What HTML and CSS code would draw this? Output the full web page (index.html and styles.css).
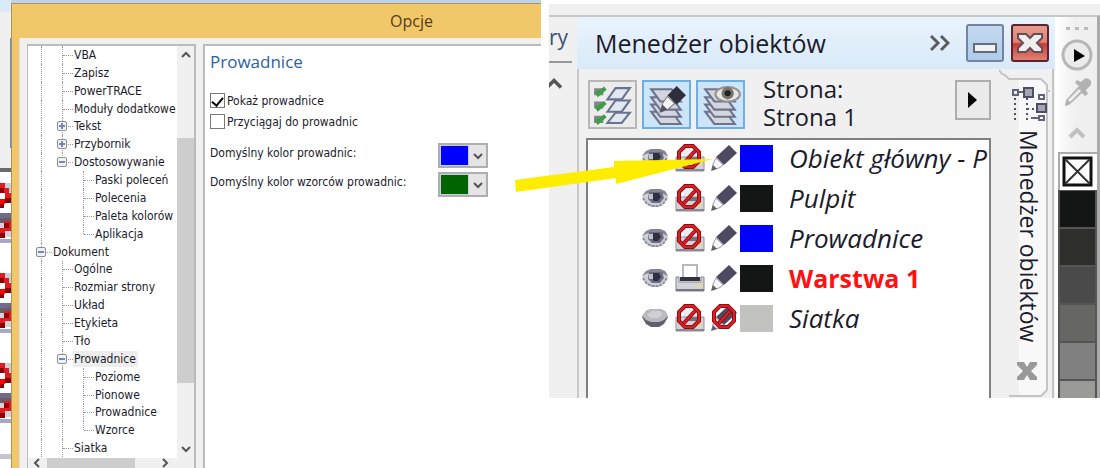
FILE: index.html
```html
<!DOCTYPE html>
<html lang="pl">
<head>
    <meta charset="UTF-8">
    <meta name="viewport" content="width=device-width, initial-scale=1.0">
    <title>Opcje - Prowadnice</title>
    <link rel="stylesheet" href="styles.css">
</head>
<body>
    <!-- shared icons -->
    <svg class="defs" aria-hidden="true">
        <symbol id="eye" viewBox="0 0 28 20">
            <path d="M1 8L5 3L10 1H19L24 3L27 8L24 14L18 19H10L4 14Z" fill="#cfcfd8"/>
            <path d="M1 8L5 3L10 1H19L24 3L27 8L22 6L18 4H10L5 6Z" fill="#858594"/>
            <path d="M2 10L6 16L11 18H17L22 16L26 10" fill="none" stroke="#8e8e9c" stroke-width="2" stroke-dasharray="3 1"/>
            <path d="M8 4H21L23 10L19 15H11L7 11Z" fill="#6c6c80"/>
            <path d="M12 5H18L20 9L17 13H13L11 10Z" fill="#2f2f42"/>
            <path d="M8 6h4v5H8z" fill="#c2c2ce"/>
        </symbol>
        <symbol id="eye-closed" viewBox="0 0 28 20">
            <path d="M1 9L5 3L10 1H19L24 3L27 9L23 16L18 19H10L5 16Z" fill="#60606f"/>
            <path d="M1 8L5 3L10 1H19L24 3L27 8L23 12L18 14H10L5 12Z" fill="#b9b9be"/>
            <path d="M6 7L11 3H19L22 6L17 10H10Z" fill="#d0d0d4"/>
        </symbol>
        <symbol id="printer" viewBox="0 0 30 28">
            <path d="M8 1H22V16H8Z" fill="#fff" stroke="#b8b8c6" stroke-width="2"/>
            <path d="M1 13H4V18H26V13H29V27H1Z" fill="#d2d2d8" stroke="#83838f" stroke-width="1"/>
            <path d="M5 13H25V17H5Z" fill="#33333f"/>
            <path d="M1 25H29V27H1Z" fill="#777783"/>
            <path d="M23 20h3v3h-3z" fill="#f4da6b"/>
        </symbol>
        <symbol id="ban" viewBox="0 0 26 26">
            <path d="M9 2H17L23 8V17L17 23H9L3 17V8ZM8 19L19 7" fill="none" stroke="#8d0d14" stroke-width="4"/>
            <path d="M9 2H17L23 8V17L17 23H9L3 17V8ZM8 19L19 7" fill="none" stroke="#e01f24" stroke-width="2"/>
        </symbol>
        <symbol id="no-print" viewBox="0 0 30 28">
            <path d="M8 1H22V16H8Z" fill="#ececf0"/>
            <path d="M1 13H29V27H1Z" fill="#d2d2d8" stroke="#92929e" stroke-width="1"/>
            <path d="M14 13H25V17H14Z" fill="#74747e"/>
            <path d="M1 25H29V27H1Z" fill="#888893"/>
            <path d="M23 19h3v3h-3z" fill="#f4da6b"/>
            <use href="#ban" x="1" y="0" width="26" height="26"/>
        </symbol>
        <symbol id="pencil" viewBox="0 0 28 28">
            <path d="M19 1L27 9L14 21L6 13Z" fill="#4d4a62"/>
            <path d="M6 14L13 21L9 24L2 26L3 20Z" fill="#f7f7f9" stroke="#a0a0aa" stroke-width="1"/>
            <path d="M1 27L3 21L7 25Z" fill="#62626f"/>
        </symbol>
        <symbol id="no-edit" viewBox="0 0 28 28">
            <use href="#pencil" width="28" height="28"/>
            <use href="#ban" x="1" y="0" width="26" height="26"/>
        </symbol>
        <symbol id="layer" viewBox="0 0 34 16">
            <path d="M2 2H22L31 14H11Z" fill="#d3d5df" stroke="#6d738b" stroke-width="2"/>
        </symbol>
        <symbol id="chevron" viewBox="0 0 10 8">
            <path d="M1 6L5 2L9 6" fill="none" stroke="currentColor" stroke-width="2"/>
        </symbol>
    </svg>

    <div class="page">
        <div class="options-shot">
            <svg class="desktop" viewBox="0 0 11 468" preserveAspectRatio="xMinYMin slice" aria-hidden="true">
                <defs>
                    <g id="pixels">
                        <path d="M0 0H11V14H0Z" fill="#fff"/>
                        <path d="M5 0H11V9H5Z" fill="#cfcfd5"/>
                        <path d="M0 0H5V5H9V10H11V19H5V10H0Z" fill="#e01c22"/>
                        <path d="M0 5H4V10H0ZM5 15H11V20H5ZM0 21H4V25H0Z" fill="#8d0004"/>
                        <path d="M0 16H5V21H0Z" fill="#f00"/>
                        <path d="M0 30H11V35H0Z" fill="#706a8d"/>
                        <path d="M0 35H11V40H0Z" fill="#675d68"/>
                        <path d="M0 40H11V54H0Z" fill="#d5d2da"/>
                        <path d="M4 38H11V48H5V54H0V45H4Z" fill="#e01c22"/>
                        <path d="M4 40H9V45H4ZM0 50H5V55H0Z" fill="#8d0004"/>
                        <path d="M0 56H11V60H0Z" fill="#aaa9c4"/>
                    </g>
                </defs>
                <path d="M0 0H11V468H0Z" fill="#fff"/>
                <path d="M0 12H11V168H0Z" fill="#f0f0f0"/>
                <path d="M0 0H11V12H0Z" fill="#d9eaf9"/>
                <path d="M10 38H11V148H10Z" fill="#5a8ed8"/>
                <path d="M0 168H11V172H0Z" fill="#696969"/>
                <use href="#pixels" y="183"/>
                <use href="#pixels" y="273"/>
                <use href="#pixels" y="363"/>
                <path d="M0 454H11V459H0Z" fill="#c5c5cf"/>
            </svg>
            <div class="dialog">
                <div class="dialog-title">Opcje</div>
                <div class="dialog-body">
                    <div class="tree-box">
                        <ul class="tree">
                            <li><i class="guide"></i><i class="guide stub"></i>VBA</li>
                            <li><i class="guide"></i><i class="guide stub"></i>Zapisz</li>
                            <li><i class="guide"></i><i class="guide stub"></i>PowerTRACE</li>
                            <li><i class="guide"></i><i class="guide stub"></i>Moduły dodatkowe</li>
                            <li><i class="guide"></i><i class="guide stub"></i><button class="toggle plus" aria-label="Rozwiń Tekst"></button>Tekst</li>
                            <li><i class="guide"></i><i class="guide stub"></i><button class="toggle plus" aria-label="Rozwiń Przybornik"></button>Przybornik</li>
                            <li><i class="guide"></i><i class="guide stub last"></i><button class="toggle" aria-label="Zwiń Dostosowywanie"></button>Dostosowywanie</li>
                            <li><i class="guide"></i><i class="guide empty"></i><i class="guide stub"></i>Paski poleceń</li>
                            <li><i class="guide"></i><i class="guide empty"></i><i class="guide stub"></i>Polecenia</li>
                            <li><i class="guide"></i><i class="guide empty"></i><i class="guide stub"></i>Paleta kolorów</li>
                            <li><i class="guide"></i><i class="guide empty"></i><i class="guide stub last"></i>Aplikacja</li>
                            <li><i class="guide stub"></i><button class="toggle" aria-label="Zwiń Dokument"></button>Dokument</li>
                            <li><i class="guide"></i><i class="guide stub"></i>Ogólne</li>
                            <li><i class="guide"></i><i class="guide stub"></i>Rozmiar strony</li>
                            <li><i class="guide"></i><i class="guide stub"></i>Układ</li>
                            <li><i class="guide"></i><i class="guide stub"></i>Etykieta</li>
                            <li><i class="guide"></i><i class="guide stub"></i>Tło</li>
                            <li><i class="guide"></i><i class="guide stub"></i><button class="toggle" aria-label="Zwiń Prowadnice"></button><span class="selected">Prowadnice</span></li>
                            <li><i class="guide"></i><i class="guide"></i><i class="guide stub"></i>Poziome</li>
                            <li><i class="guide"></i><i class="guide"></i><i class="guide stub"></i>Pionowe</li>
                            <li><i class="guide"></i><i class="guide"></i><i class="guide stub"></i>Prowadnice</li>
                            <li><i class="guide"></i><i class="guide"></i><i class="guide stub last"></i>Wzorce</li>
                            <li><i class="guide"></i><i class="guide stub"></i>Siatka</li>
                        </ul>
                        <div class="scroll-y">
                            <svg class="arrow"><use href="#chevron"/></svg>
                            <div class="thumb"></div>
                            <svg class="arrow down"><use href="#chevron"/></svg>
                        </div>
                        <div class="scroll-x">
                            <svg class="arrow left"><use href="#chevron"/></svg>
                            <div class="thumb"></div>
                            <svg class="arrow right"><use href="#chevron"/></svg>
                        </div>
                    </div>
                    <div class="settings">
                        <h1>Prowadnice</h1>
                        <label class="check"><input type="checkbox" checked>Pokaż prowadnice</label>
                        <label class="check"><input type="checkbox">Przyciągaj do prowadnic</label>
                        <div class="colors">
                            <span id="guideColor">Domyślny kolor prowadnic:</span>
                            <button class="color-picker" aria-labelledby="guideColor"><span class="chip blue"></span><svg class="arrow down"><use href="#chevron"/></svg></button>
                            <span id="presetColor">Domyślny kolor wzorców prowadnic:</span>
                            <button class="color-picker" aria-labelledby="presetColor"><span class="chip green"></span><svg class="arrow down"><use href="#chevron"/></svg></button>
                        </div>
                    </div>
                </div>
            </div>
        </div>

        <div class="manager-shot">
            <div class="sliver">
                <div class="sliver-text">ry</div>
                <svg class="arrow big"><use href="#chevron"/></svg>
            </div>
            <div class="docker">
                <div class="docker-title">
                    <h2>Menedżer obiektów</h2>
                    <svg class="more" viewBox="0 0 20 18"><path d="M1 2L8 9L1 16M11 2L18 9L11 16" fill="none" stroke="#5c5c5c" stroke-width="3"/></svg>
                    <button class="win-button" aria-label="Zwiń">
                        <svg viewBox="0 0 34 34"><path d="M6 18H28V26H6Z" fill="#f2f2f2" stroke="#666c80" stroke-width="2"/></svg>
                    </button>
                    <button class="win-button close" aria-label="Zamknij">
                        <svg viewBox="0 0 34 34"><path d="M5 8H13L17 12L21 8H29V12L24 17L29 22V26H21L17 22L13 26H5V22L10 17L5 12Z" fill="#eee" stroke="#625058" stroke-width="2"/></svg>
                    </button>
                </div>
                <div class="docker-body">
                    <div class="docker-main">
                        <div class="toolbar">
                            <button class="tool" aria-label="Właściwości obiektów">
                                <svg viewBox="0 0 44 44">
                                    <path d="M4 6H13V13H4ZM4 19H13V26H4ZM4 33H13V40H4Z" fill="#85858d"/>
                                    <path d="M6 9L8 12L15 6M6 23L8 26L15 20M6 36L8 39L15 33" fill="none" stroke="#3f9d48" stroke-width="4"/>
                                    <path d="M25 6H39L31 17H17ZM25 18H39L31 29H17ZM25 30H39L31 40H17Z" fill="#e2e8f2" stroke="#68738c" stroke-width="2"/>
                                </svg>
                            </button>
                            <button class="tool on" aria-label="Edytuj na wszystkich warstwach">
                                <svg viewBox="0 0 44 44">
                                    <use href="#layer" x="5" y="27" width="34" height="16"/>
                                    <use href="#layer" x="5" y="20" width="34" height="16"/>
                                    <use href="#layer" x="5" y="13" width="34" height="16"/>
                                    <use href="#layer" x="5" y="5" width="34" height="16"/>
                                    <path d="M32 4L41 13L32 22L23 13Z" fill="#302e3c"/>
                                    <path d="M23 14L30 21L23 27L17 29L18 21Z" fill="#f4f4f4" stroke="#777" stroke-width="1"/>
                                    <path d="M15 30L18 22L23 27Z" fill="#555561"/>
                                </svg>
                            </button>
                            <button class="tool on" aria-label="Widok menedżera warstw">
                                <svg viewBox="0 0 44 44">
                                    <use href="#layer" x="5" y="27" width="34" height="16"/>
                                    <use href="#layer" x="5" y="20" width="34" height="16"/>
                                    <use href="#layer" x="5" y="13" width="34" height="16"/>
                                    <use href="#layer" x="5" y="5" width="34" height="16"/>
                                    <ellipse cx="29" cy="12" rx="12" ry="7" fill="#e8e6e2" stroke="#96928e" stroke-width="2"/>
                                    <circle cx="29" cy="11" r="6" fill="#77736e"/>
                                    <circle cx="29" cy="11" r="3" fill="#222"/>
                                </svg>
                            </button>
                            <div class="page-name">Strona:<br>Strona 1</div>
                            <button class="flyout" aria-label="Opcje menedżera"><svg viewBox="0 0 10 16"><path d="M0 0L9 8L0 16Z" fill="#000"/></svg></button>
                        </div>
                        <ul class="layers">
                            <li>
                                <svg class="eye"><use href="#eye"/></svg><svg class="print"><use href="#no-print"/></svg><svg class="edit"><use href="#pencil"/></svg>
                                <span class="swatch blue"></span><span class="name">Obiekt główny - P</span>
                            </li>
                            <li>
                                <svg class="eye"><use href="#eye"/></svg><svg class="print"><use href="#no-print"/></svg><svg class="edit"><use href="#pencil"/></svg>
                                <span class="swatch black"></span><span class="name">Pulpit</span>
                            </li>
                            <li>
                                <svg class="eye"><use href="#eye"/></svg><svg class="print"><use href="#no-print"/></svg><svg class="edit"><use href="#pencil"/></svg>
                                <span class="swatch blue"></span><span class="name">Prowadnice</span>
                            </li>
                            <li class="active">
                                <svg class="eye"><use href="#eye"/></svg><svg class="print"><use href="#printer"/></svg><svg class="edit"><use href="#pencil"/></svg>
                                <span class="swatch black"></span><span class="name">Warstwa 1</span>
                            </li>
                            <li>
                                <svg class="eye"><use href="#eye-closed"/></svg><svg class="print"><use href="#no-print"/></svg><svg class="edit"><use href="#no-edit"/></svg>
                                <span class="swatch grey"></span><span class="name">Siatka</span>
                            </li>
                        </ul>
                    </div>
                    <div class="side-tab">
                        <svg class="tab-edge" viewBox="0 0 56 329" preserveAspectRatio="none" aria-hidden="true">
                            <path d="M20 10H42L48 16V321L42 327H20Z" fill="#f8f8f8"/>
                            <path d="M0 1L3 5L6 6L10 10H42L48 16V321L42 327H10M48 22H51M54 0V329" fill="none" stroke="#c4c4c4" stroke-width="2"/>
                        </svg>
                        <svg class="tab-icon" viewBox="0 0 36 36">
                            <path d="M2 4H7V9H2ZM7 6H13M28 9H33V13H28ZM28 30H33V34H28ZM20 32H28" fill="none" stroke="#62627a" stroke-width="2"/>
                            <path d="M13 2H22V11H13ZM26 18H35V26H26Z" fill="#a4a4b4" stroke="#4d4d63" stroke-width="2"/>
                            <path d="M4 12V36M16 12V36M16 23H26" fill="none" stroke="#50505e" stroke-width="2" stroke-dasharray="2 3"/>
                        </svg>
                        <span class="tab-text">Menedżer obiektów</span>
                        <svg class="tab-close" viewBox="0 0 20 18"><path d="M0 0H7L10 5L13 0H20V3L14 9L20 15V18H13L10 13L7 18H0V15L6 9L0 3Z" fill="#999"/></svg>
                    </div>
                </div>
            </div>
            <div class="palette">
                <svg class="palette-tools" viewBox="0 0 45 135" aria-hidden="true">
                    <path d="M11 10h4v3h-4zM20 10h4v3h-4zM29 10h4v3h-4z" fill="#bbb"/>
                    <circle cx="22" cy="38" r="14" fill="#ececec" stroke="#b7b7b7" stroke-width="3"/>
                    <path d="M19 32L30 39L19 45Z" fill="#000"/>
                    <path d="M10 89L11 83L24 69L20 66L22 63L26 65L29 62Q33 60 36 64Q37 68 33 71L31 73L33 77L30 79L27 76L14 88Z" fill="#b2b2b2"/>
                    <path d="M14 84L25 73" stroke="#eee" stroke-width="3"/>
                    <path d="M15 120L22 113L29 120" fill="none" stroke="#c0c0c0" stroke-width="4"/>
                </svg>
                <div class="no-fill"><svg viewBox="0 0 31 31"><path d="M2 2H29V29H2Z" fill="#fff" stroke="#111" stroke-width="3"/><path d="M3 3L28 28M28 3L3 28" stroke="#333" stroke-width="2"/></svg></div>
                <div class="ink k100"></div>
                <div class="ink k90"></div>
                <div class="ink k80"></div>
                <div class="ink k70"></div>
                <div class="ink k60"></div>
                <div class="ink k50"></div>
            </div>
        </div>

        <!-- arrow from the colour picker to the layer -->
        <svg class="pointer" viewBox="0 0 200 36" aria-hidden="true"><path d="M0 21L99 8V2L198 0L101 25V19L1 33Z" fill="#ffed00"/></svg>
    </div>
</body>
</html>
```
FILE: styles.css
```css
* {
    box-sizing: border-box;
}

body {
    margin: 0;
    background-color: #fff;
    font-family: "Open Sans", "Noto Sans", sans-serif;
    font-size: 12px;
    color: #1b1b2b;
}

ul, h1, h2 {
    margin: 0;
    padding: 0;
    list-style: none;
    font-weight: normal;
}

button {
    padding: 0;
    border: none;
    flex: none;
}

svg {
    display: block;
    flex: none;
}

.defs {
    position: absolute;
    width: 0;
    height: 0;
}

.page {
    position: relative;
    display: grid;
    grid-template-columns: 541fr 551fr;
    column-gap: 8px;
    height: 100vh;
    overflow: hidden;
}

/* options dialog */
.options-shot {
    display: flex;
    min-width: 0;
    min-height: 0;
    border-top: 3px solid #bdd3ea;
    background-color: #d9eaf9;
}

.desktop {
    width: 11px;
    height: 468px;
    margin-top: -3px;
}

.dialog {
    flex: 1;
    display: flex;
    flex-direction: column;
    min-width: 0;
    border-left: 1px solid #b5924c;
    border-top: 1px solid #b5924c;
    padding-left: 7px;
    background-color: #f0c869;
}

.dialog-title {
    height: 34px;
    line-height: 34px;
    padding-left: 371px;
    font-size: 16px;
    color: #553b1f;
}

.dialog-body {
    flex: 1;
    display: flex;
    gap: 7px;
    min-height: 0;
    padding: 6px 0 0 7px;
    border-left: 1px solid #ddd;
    background-color: #f0f0f0;
}

.tree-box {
    display: grid;
    grid-template-columns: 149px 17px;
    grid-template-rows: 1fr 10px;
    width: 169px;
    border: solid #bbb;
    border-width: 2px 2px 0 1px;
    background-color: #fff;
}

.tree {
    display: flex;
    flex-direction: column;
    min-height: 0;
    padding-left: 13px;
    padding-bottom: 1px;
    overflow: hidden;
}

.tree,
.check,
.colors {
    font-family: "DejaVu Sans Condensed", "Open Sans", sans-serif;
    font-size: 12px;
}

.tree li {
    flex: 1;
    display: flex;
    align-items: center;
    min-height: 0;
    line-height: 16px;
    white-space: nowrap;
}

.guide {
    position: relative;
    align-self: stretch;
    width: 21px;
    flex: none;
    border-left: 1px dotted #999;
}

.guide.empty {
    border-color: transparent;
}

.guide.stub {
    width: 12px;
}

.guide.stub::after {
    content: "";
    display: block;
    width: 10px;
    height: 50%;
    border-bottom: 1px dotted #999;
}

.guide.last {
    height: 50%;
    align-self: flex-start;
}

.guide.last::after {
    height: 100%;
}

.toggle {
    position: relative;
    width: 10px;
    height: 10px;
    margin-left: -17px;
    margin-right: 7px;
    border: 1px solid #8d8d8d;
    border-radius: 2px;
    background: linear-gradient(#6d88c4, #6d88c4) center / 6px 2px no-repeat #f2f2f2;
}

.toggle.plus {
    background: linear-gradient(#6d88c4, #6d88c4) center / 6px 2px no-repeat, linear-gradient(#6d88c4, #6d88c4) center / 2px 6px no-repeat #f2f2f2;
}

.selected {
    margin-left: -1px;
    padding: 0 2px 0 1px;
    background-color: #ededed;
}

.arrow {
    width: 10px;
    height: 8px;
    color: #555;
}

.arrow.down {
    transform: rotate(180deg);
}

.arrow.left {
    transform: rotate(-90deg);
}

.arrow.right {
    transform: rotate(90deg);
}

.arrow.big {
    width: 18px;
    height: 14px;
}

.scroll-y {
    display: flex;
    flex-direction: column;
    align-items: center;
    padding: 5px 0;
    background-color: #f0f0f0;
}

.scroll-y .thumb {
    flex: none;
    width: 17px;
    height: 61%;
    margin: 79px 0 auto;
    background-color: #cdcdcd;
}

.scroll-x {
    grid-column: 1 / 3;
    display: flex;
    align-items: center;
    padding: 0 24px 0 4px;
    background-color: #f0f0f0;
}

.scroll-x .thumb {
    width: 88px;
    height: 10px;
    margin: 0 auto 0 5px;
    background-color: #cdcdcd;
}

.settings {
    flex: 1;
    padding: 4px 0 0 5px;
    border-left: 2px solid #bbb;
    border-top: 2px solid #bbb;
    background-color: #fff;
}

.settings h1 {
    margin-bottom: 16px;
    font-size: 17px;
    line-height: 24px;
    color: #2b62a5;
}

.check {
    display: flex;
    align-items: center;
    gap: 2px;
    height: 21px;
}

.check input {
    appearance: none;
    display: grid;
    justify-content: center;
    width: 15px;
    height: 15px;
    margin: 0;
    border: 1px solid #777;
    background-color: #fff;
}

.check input:checked::after {
    content: "";
    width: 5px;
    height: 9px;
    margin-top: 1px;
    border: solid #000;
    border-width: 0 2px 2px 0;
    transform: rotate(40deg);
}

.colors {
    display: grid;
    grid-template-columns: 228px 50px;
    row-gap: 4px;
    margin-top: 11px;
}

.colors span {
    line-height: 20px;
    white-space: nowrap;
}

.color-picker {
    display: flex;
    align-items: center;
    height: 25px;
    padding-right: 3px;
    border: 2px solid #adadb2;
    background-color: #e5e5e5;
}

.chip {
    width: 29px;
    height: 21px;
    margin-right: 4px;
    border: 1px solid #ccd;
}

.blue {
    background-color: #00f;
}

.green {
    background-color: #006400;
}

/* object manager */
.manager-shot {
    display: grid;
    grid-template-columns: 28px 1fr 45px;
    align-self: start;
    min-width: 0;
    height: 394px;
    margin-top: 4px;
    padding-top: 11px;
    background-color: #f0f0f0;
    overflow: hidden;
}

.sliver {
    padding-right: 5px;
    border-top: 2px solid #c8c8c8;
}

.sliver-text {
    height: 46px;
    margin-bottom: 14px;
    border-bottom: 2px solid #999;
    font-size: 21px;
    line-height: 40px;
    color: #3d5270;
}

.sliver .arrow {
    margin-left: -4px;
}

.docker {
    display: flex;
    flex-direction: column;
    min-width: 0;
    min-height: 0;
    border-top: 2px solid #c8c8c8;
}

.docker-title {
    display: flex;
    align-items: center;
    height: 52px;
    padding: 0 6px 0 18px;
    background: linear-gradient(#e9f4fd, #d9e9f9);
}

.docker-title h2 {
    margin-right: auto;
    font-size: 25px;
    line-height: 32px;
}

.more {
    width: 20px;
    height: 18px;
    margin-right: 16px;
}

.win-button {
    width: 38px;
    height: 38px;
    margin-right: 7px;
    border: 2px solid #7482a6;
    border-radius: 3px;
    background: linear-gradient(#c5daf0, #aecbe8);
}

.win-button.close {
    margin-right: 0;
    border-color: #5c2432;
    background: linear-gradient(#e89a8c, #e08274 48%, #cb3a30 52%, #e08374);
}

.docker-body {
    flex: 1;
    display: flex;
    min-height: 0;
    border-left: 2px solid #c8c8c8;
}

.docker-main {
    flex: 1;
    display: flex;
    flex-direction: column;
    min-width: 0;
    padding-left: 7px;
}

.toolbar {
    display: flex;
    align-items: flex-start;
    gap: 5px;
    height: 69px;
    padding: 11px 0 0 2px;
}

.tool {
    width: 49px;
    height: 49px;
    border: 2px solid #b7b7b7;
    background-color: #ececec;
}

.tool.on {
    border-color: #6caee8;
    background-color: #cde5fa;
}

.page-name {
    margin: -5px auto 0 13px;
    font-size: 24px;
    line-height: 28px;
    white-space: nowrap;
}

.flyout {
    width: 36px;
    height: 40px;
    border: 2px solid #adadad;
    background-color: #eaeaea;
}

.flyout svg {
    width: 10px;
    height: 16px;
    margin: auto;
}

.layers {
    flex: 1;
    min-height: 0;
    border: 2px solid #808080;
    border-bottom: none;
    background-color: #fff;
    overflow: hidden;
}

.layers li {
    display: flex;
    align-items: center;
    height: 40px;
    padding: 0 0 4px 53px;
}

.eye {
    width: 28px;
    height: 20px;
    margin-right: 6px;
}

.print {
    width: 30px;
    height: 28px;
    margin-right: 5px;
}

.edit {
    width: 28px;
    height: 28px;
    margin-right: 2px;
}

.swatch {
    flex: none;
    width: 33px;
    height: 27px;
    margin-right: 16px;
}

.black {
    background-color: #141615;
}

.grey {
    background-color: #c2c2c0;
}

.name {
    font-size: 26px;
    font-style: italic;
    line-height: 36px;
    white-space: nowrap;
}

.active .name {
    font-size: 25px;
    color: #f11;
    font-style: normal;
    font-weight: bold;
}

.side-tab {
    position: relative;
    display: flex;
    flex-direction: column;
    align-items: center;
    width: 64px;
    padding: 17px 0 0 12px;
}

.tab-edge {
    position: absolute;
    top: 0;
    right: 0;
    width: 56px;
    height: 100%;
}

.tab-icon {
    position: relative;
    width: 36px;
    height: 36px;
    margin-bottom: 8px;
}

.tab-text {
    position: relative;
    height: 218px;
    font-size: 23px;
    font-weight: 500;
    line-height: 28px;
    white-space: nowrap;
    writing-mode: vertical-rl;
}

.tab-close {
    position: relative;
    width: 20px;
    height: 18px;
    margin-top: 14px;
    margin-right: 4px;
}

.palette {
    border-top: 2px solid #c8c8c8;
    border-right: 3px solid #ababab;
    background: linear-gradient(90deg, #fff, #f0f0f0 20px);
    overflow: hidden;
}

.palette-tools {
    width: 45px;
    height: 135px;
}

.no-fill {
    height: 38px;
    margin-left: 3px;
    padding: 2px;
    border-top: 2px solid #aaa;
    border-left: 2px solid #aaa;
    background-color: #fff;
}

.no-fill svg {
    width: 31px;
    height: 31px;
}

.ink {
    height: 38px;
    margin-left: 3px;
    border: 2px solid #555;
    border-top-width: 1px;
    border-bottom-width: 1px;
}

.k100 {
    background-color: #141615;
}

.k90 {
    background-color: #2f2f2d;
}

.k80 {
    background-color: #4a4a4a;
}

.k70 {
    background-color: #666664;
}

.k60 {
    background-color: #808080;
}

.k50 {
    background-color: #9a9a98;
}

.pointer {
    position: absolute;
    left: 515px;
    top: 159px;
    width: 200px;
    height: 36px;
}
```
